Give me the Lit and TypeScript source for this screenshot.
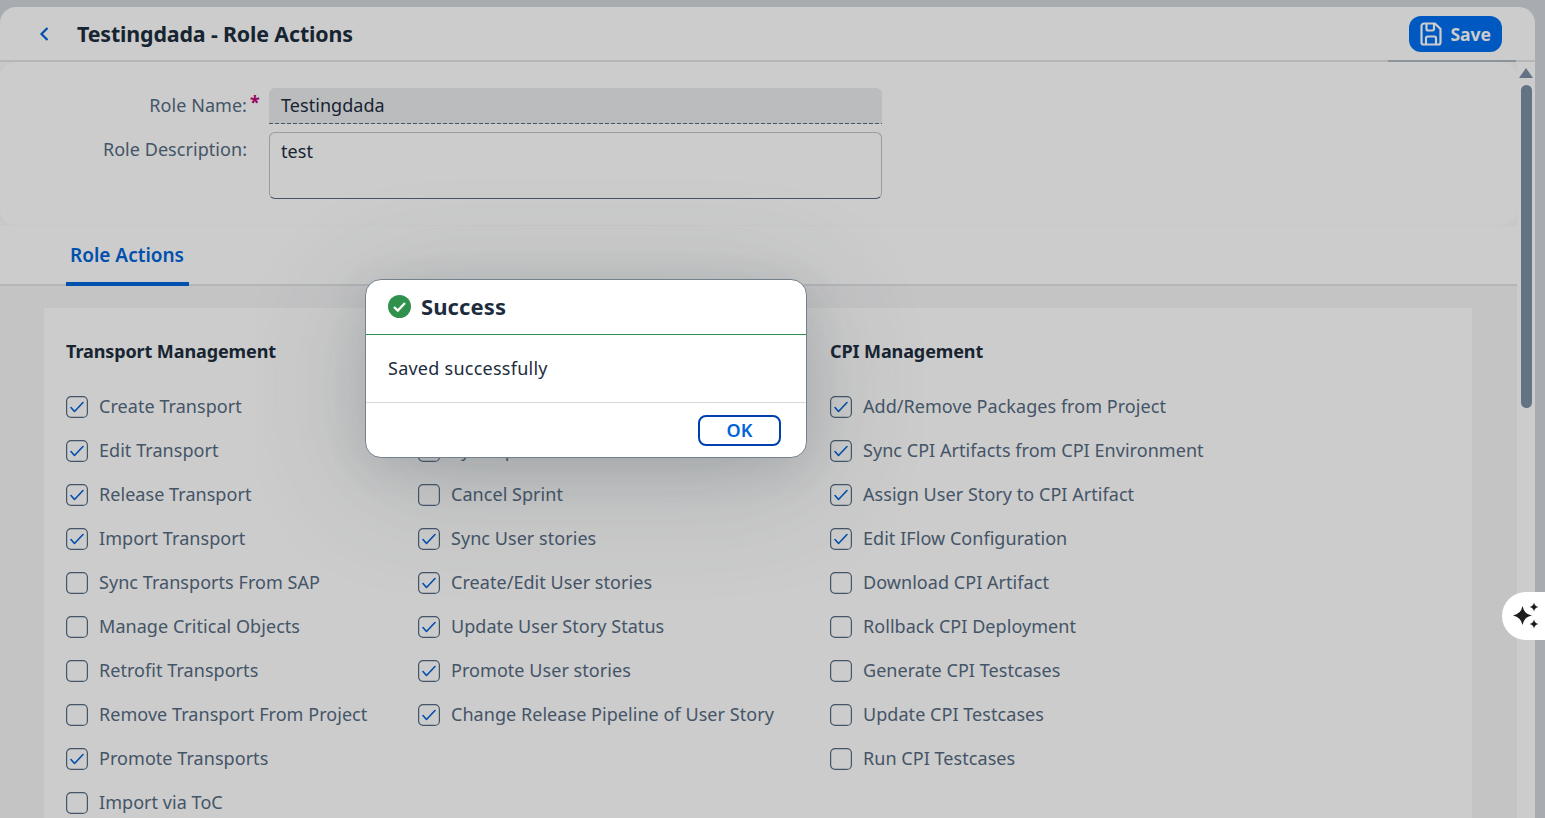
import { LitElement, html, css, svg } from 'lit';
import { customElement } from 'lit/decorators.js';

type Action = [string, boolean];

const columns: { title: string; items: Action[] }[] = [
  {
    title: 'Transport Management',
    items: [
      ['Create Transport', true],
      ['Edit Transport', true],
      ['Release Transport', true],
      ['Import Transport', true],
      ['Sync Transports From SAP', false],
      ['Manage Critical Objects', false],
      ['Retrofit Transports', false],
      ['Remove Transport From Project', false],
      ['Promote Transports', true],
      ['Import via ToC', false],
    ],
  },
  {
    title: 'Sprint Management',
    items: [
      ['Create Sprint', false],
      ['Sync Sprint', false],
      ['Cancel Sprint', false],
      ['Sync User stories', true],
      ['Create/Edit User stories', true],
      ['Update User Story Status', true],
      ['Promote User stories', true],
      ['Change Release Pipeline of User Story', true],
    ],
  },
  {
    title: 'CPI Management',
    items: [
      ['Add/Remove Packages from Project', true],
      ['Sync CPI Artifacts from CPI Environment', true],
      ['Assign User Story to CPI Artifact', true],
      ['Edit IFlow Configuration', true],
      ['Download CPI Artifact', false],
      ['Rollback CPI Deployment', false],
      ['Generate CPI Testcases', false],
      ['Update CPI Testcases', false],
      ['Run CPI Testcases', false],
    ],
  },
];

const check = svg`<path d="M5 11.500l3.500 4L17 6.500" fill="none" stroke="#0064d9" stroke-width="1.600" stroke-linecap="round" stroke-linejoin="round"/>`;

@customElement('app-root')
export class AppRoot extends LitElement {
  static styles = css`
    :host {
      display: block;
      position: relative;
      height: 100vh;
      overflow: hidden;
      background: #d3d8dd;
      font-family: 'Noto Sans', 'Open Sans', sans-serif;
      color: #1d2d3e;
    }

    .page {
      width: 1535px;
      height: 811px;
      margin-top: 7px;
      background: #fff;
      border-radius: 16px 16px 0 0;
      display: flex;
      flex-direction: column;
      overflow: hidden;
    }

    .header {
      flex: none;
      height: 55px;
      box-sizing: border-box;
      display: flex;
      align-items: center;
      border-bottom: 2px solid #e2e4e6;
      border-image: linear-gradient(90deg, #e2e4e6 0 1387px, #aeb8c2 1387px 1515px, #e2e4e6 1515px) 1;
      padding-right: 33px;
    }

    .back {
      width: 77px;
      padding-left: 38px;
      box-sizing: border-box;
      display: flex;
    }

    .header h1 {
      flex: 1;
      margin: 0;
      font-size: 21.4px;
      font-weight: 700;
      letter-spacing: -0.15px;
    }

    .save {
      display: flex;
      align-items: center;
      gap: 8px;
      height: 36px;
      padding: 0 11px 0 11px;
      border: none;
      border-radius: 12px;
      background: #0070f2;
      color: #fff;
      font: 700 17.5px 'Noto Sans', sans-serif;
    }

    .body {
      flex: 1;
      display: flex;
      min-height: 0;
    }

    .scroll {
      flex: 1;
      min-width: 0;
      overflow: hidden;
      background: #f5f6f7;
    }

    .form-wrap {
      background: #fafafb;
      height: 164px;
    }

    .form {
      box-sizing: border-box;
      height: 163px;
      padding-top: 26px;
      background: #fff;
      border-radius: 16px;
      display: grid;
      grid-template-columns: 247px 613px;
      column-gap: 22px;
      row-gap: 8px;
      grid-template-rows: 36px 67px;
      font-size: 18px;
      letter-spacing: 0.05px;
    }

    .label {
      text-align: right;
      color: #556b82;
      white-space: nowrap;
      position: relative;
      line-height: 34px;
    }

    .req {
      position: absolute;
      left: 250px;
      top: -3px;
      color: #c0067e;
      font-weight: 700;
    }

    .input {
      background-color: #eaecee;
      background-image: repeating-linear-gradient(90deg, #556b82 0 4px, transparent 4px 6px);
      background-position: left bottom;
      background-size: 100% 1px;
      background-repeat: no-repeat;
      border-radius: 6px 6px 0 0;
      padding-left: 12px;
      line-height: 34px;
      box-sizing: border-box;
    }

    .area {
      border: 1px solid #bcc3ca;
      border-bottom-color: #556b82;
      border-radius: 6px;
      padding: 4px 11px;
      line-height: 28px;
      box-sizing: border-box;
      background: #fff;
    }

    .tabs {
      height: 60px;
      box-sizing: border-box;
      background: #fff;
      border-bottom: 2px solid #e2e4e6;
      padding-left: 66px;
    }

    .tab {
      display: inline-block;
      box-sizing: border-box;
      height: 60px;
      padding: 16px 5px 0 4px;
      color: #0064d9;
      font-size: 19px;
      font-weight: 600;
      border-bottom: 4px solid #0064d9;
    }

    .panel {
      margin: 22px 45px 0 44px;
      padding: 22px 22px 0;
      background: #fff;
      display: grid;
      grid-template-columns: 352px 412px 1fr;
    }

    .panel h2 {
      margin: 0 0 13px;
      height: 42px;
      line-height: 42px;
      font-size: 18px;
      font-weight: 700;
      letter-spacing: -0.1px;
    }

    .row {
      display: flex;
      align-items: center;
      gap: 11px;
      height: 44px;
      font-size: 18px;
      letter-spacing: 0.05px;
      color: #556b82;
      white-space: nowrap;
    }

    .row span {
      padding-bottom: 2px;
    }

    .box {
      flex: none;
      width: 22px;
      height: 22px;
    }

    .track {
      flex: none;
      width: 18px;
      background: #fff;
      display: flex;
      flex-direction: column;
      align-items: center;
      padding-top: 6px;
    }

    .arrow {
      width: 0;
      height: 0;
      border: 7px solid transparent;
      border-top: 0;
      border-bottom: 10px solid #7c90a6;
    }

    .thumb {
      margin-top: 7px;
      width: 11px;
      height: 323px;
      border-radius: 6px;
      background: #7c90a6;
    }

    .overlay {
      position: absolute;
      inset: 0;
      background: rgba(0, 0, 0, 0.2);
    }

    .dialog {
      position: absolute;
      left: 365px;
      top: 279px;
      width: 442px;
      height: 179px;
      box-sizing: border-box;
      background: #fff;
      border: 1px solid #74808c;
      border-radius: 16px;
      box-shadow: 0 10px 40px rgba(60, 70, 80, 0.12), 0 20px 120px rgba(60, 70, 80, 0.24);
      display: flex;
      flex-direction: column;
      overflow: hidden;
    }

    .dlg-head {
      flex: none;
      height: 55px;
      box-sizing: border-box;
      border-bottom: 1px solid #30914c;
      display: flex;
      align-items: center;
      gap: 10px;
      padding: 0 22px 2px;
      font-size: 22px;
      font-weight: 700;
      letter-spacing: 0.1px;
    }

    .dlg-body {
      flex: 1;
      padding: 0 0 2px 22px;
      display: flex;
      align-items: center;
      font-size: 18px;
      letter-spacing: 0.25px;
      border-bottom: 1px solid #d9d9d9;
    }

    .dlg-foot {
      flex: none;
      height: 54px;
      display: flex;
      align-items: center;
      justify-content: flex-end;
      padding: 0 25px 0 0;
      box-sizing: border-box;
    }

    .ok {
      width: 83px;
      height: 31px;
      padding: 0;
      background: #fff;
      border: 2px solid #0040b0;
      border-radius: 8px;
      color: #0064d9;
      font: 600 18px 'Noto Sans', sans-serif;
    }

    .assist {
      position: absolute;
      right: 0;
      top: 592px;
      width: 43px;
      height: 48px;
      background: #fff;
      border-radius: 24px 0 0 24px;
      display: flex;
      align-items: center;
      padding-left: 10px;
      box-sizing: border-box;
    }
  `;

  renderRow([label, on]: Action) {
    return html`<div class="row">
      <svg class="box" viewBox="0 0 22 22">
        <rect x="0.600" y="0.600" width="20.800" height="20.800" rx="4.500" fill="#fff" stroke="#556b82" stroke-width="1.200"/>
        ${on ? check : ''}
      </svg>
      <span>${label}</span>
    </div>`;
  }

  render() {
    return html`
      <div class="page">
        <div class="header">
          <div class="back">
            <svg width="12" height="16" viewBox="0 0 12 16"><path d="M9.500 2L3.500 8l6 6" fill="none" stroke="#0064d9" stroke-width="2.200"/></svg>
          </div>
          <h1>Testingdada - Role Actions</h1>
          <button class="save">
            <svg width="22" height="24" viewBox="0 0 22 24" fill="none" stroke="#fff" stroke-width="2.200">
              <path d="M4 1.500h11l5.500 5.500v13.500a2 2 0 0 1-2 2H3.500a2 2 0 0 1-2-2V4a2.500 2.500 0 0 1 2.500-2.500z"/>
              <path d="M6.500 1.500v5.500a1.500 1.500 0 0 0 1.500 1.500h4.500a1.500 1.500 0 0 0 1.500-1.500V1.500M6 22.500v-6.500a1.500 1.500 0 0 1 1.500-1.500h7a1.500 1.500 0 0 1 1.500 1.500v6.500"/>
            </svg>
            Save
          </button>
        </div>
        <div class="body">
          <div class="scroll">
            <div class="form-wrap">
              <div class="form">
                <div class="label">Role Name:<span class="req">*</span></div>
                <div class="input">Testingdada</div>
                <div class="label">Role Description:</div>
                <div class="area">test</div>
              </div>
            </div>
            <div class="tabs"><span class="tab">Role Actions</span></div>
            <div class="panel">
              ${columns.map(
                (col) => html`<div>
                  <h2>${col.title}</h2>
                  ${col.items.map((item) => this.renderRow(item))}
                </div>`,
              )}
            </div>
          </div>
          <div class="track"><div class="arrow"></div><div class="thumb"></div></div>
        </div>
      </div>
      <div class="overlay"></div>
      <div class="assist">
        <svg width="28" height="28" viewBox="0 0 28 28" fill="#1c1c1c">
          <path d="M10.500 4Q12 12 20 13.500Q12 15 10.500 23Q9 15 1 13.500Q9 12 10.500 4z"/>
          <path d="M22 0.500Q22.700 4.300 26.500 5Q22.700 5.700 22 9.500Q21.300 5.700 17.500 5Q21.300 4.300 22 0.500z"/>
          <path d="M22 17.500Q22.700 21.300 26.500 22Q22.700 22.700 22 26.500Q21.300 22.700 17.500 22Q21.300 21.300 22 17.500z"/>
        </svg>
      </div>
      <div class="dialog">
        <div class="dlg-head">
          <svg width="23" height="23" viewBox="0 0 23 23">
            <circle cx="11.500" cy="11.500" r="11.500" fill="#30914c"/>
            <path d="M6 12l3.800 3.600L17 8" fill="none" stroke="#fff" stroke-width="2.400"/>
          </svg>
          Success
        </div>
        <div class="dlg-body">Saved successfully</div>
        <div class="dlg-foot"><button class="ok">OK</button></div>
      </div>
    `;
  }
}
